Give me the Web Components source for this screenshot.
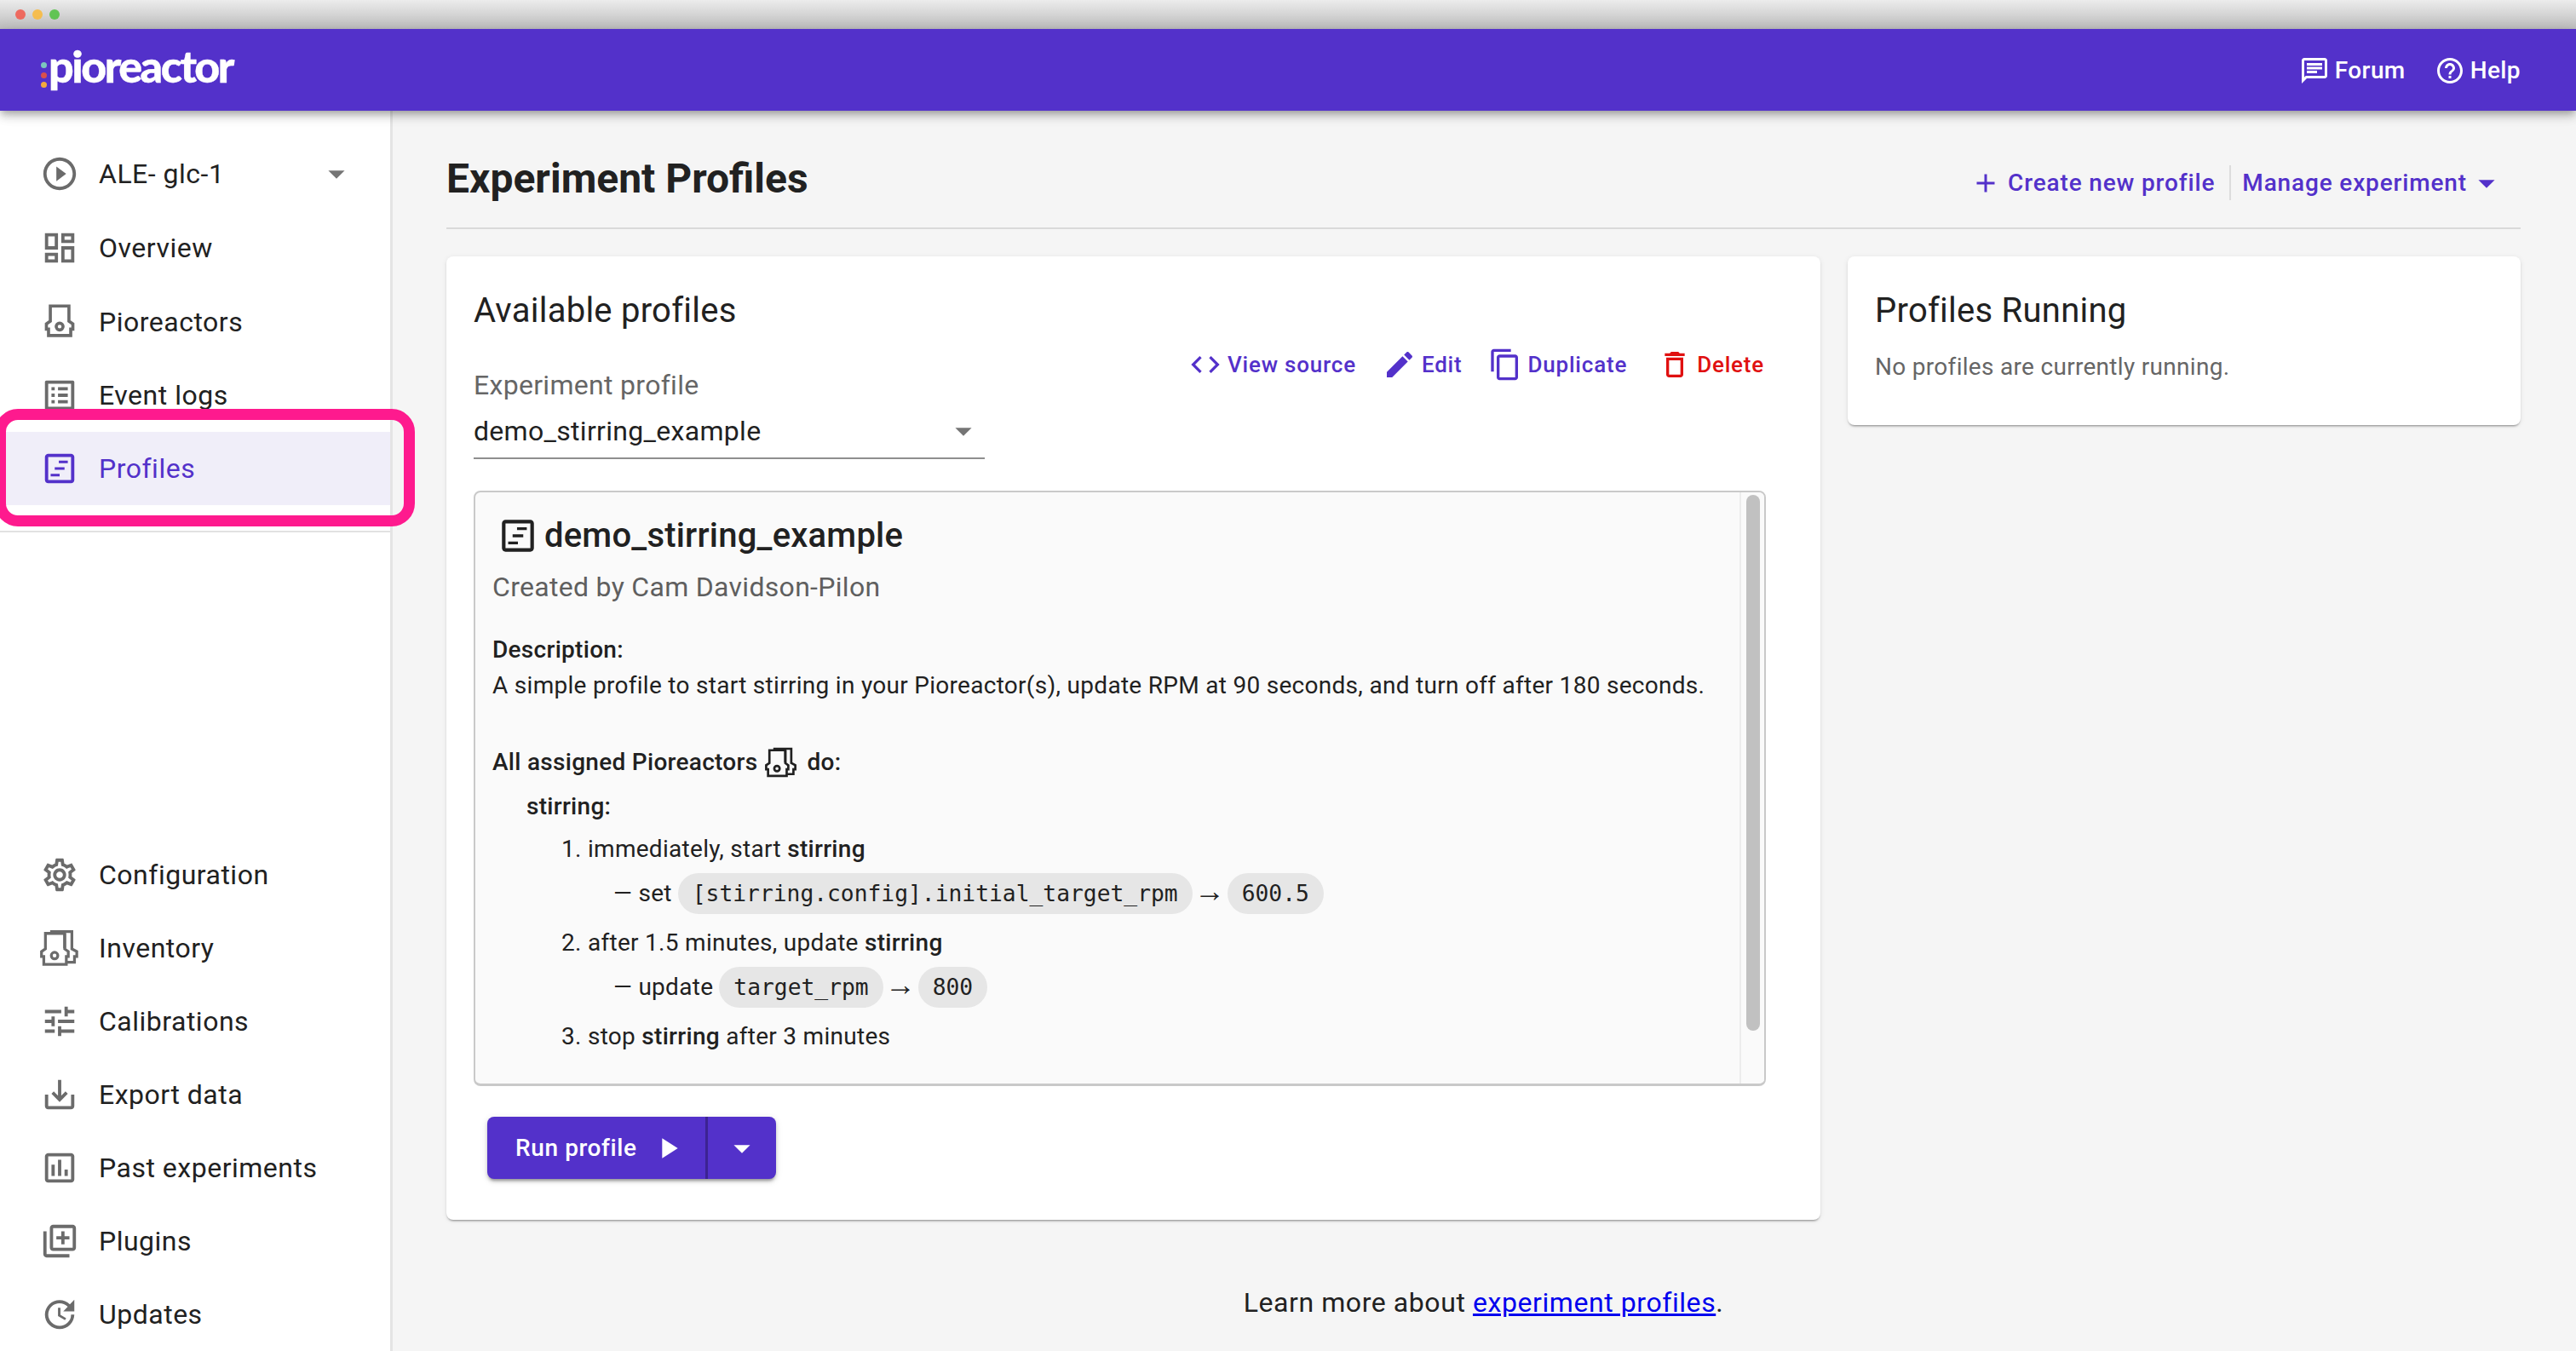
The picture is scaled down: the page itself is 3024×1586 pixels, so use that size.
<!DOCTYPE html>
<html lang="en">
<head>
<meta charset="utf-8">
<title>Pioreactor - Experiment Profiles</title>
<style>
html,body{margin:0;padding:0;background:#f5f5f5;font-family:Roboto,"Liberation Sans",sans-serif;color:#212121;}
</style>
</head>
<body>
<pio-app></pio-app>
<script>
const ICONS = {
  playCircle:'<path d="M10 16.5l6-4.5-6-4.5v9zM12 2C6.48 2 2 6.48 2 12s4.48 10 10 10 10-4.48 10-10S17.52 2 12 2zm0 18c-4.41 0-8-3.59-8-8s3.59-8 8-8 8 3.59 8 8-3.59 8-8 8z"/>',
  dashboard:'<path d="M19 5v2h-4V5h4M9 5v6H5V5h4m10 8v6h-4v-6h4M9 17v2H5v-2h4M21 3h-8v6h8V3zM11 3H3v10h8V3zm10 8h-8v10h8V11zm-10 4H3v6h8v-6z"/>',
  pioreactor:'<g fill="none" stroke="currentColor" stroke-width="1.9"><path d="M6.3 11.5V2.2h11.4v9.3l2.4 1.7v3.2h-1.3v3.9H5.2v-3.9H3.9v-3.2z"/><circle cx="12" cy="14.8" r="2.1"/></g>',
  inventory:'<g fill="none" stroke="currentColor" stroke-width="1.7"><path d="M3.3 12.5V3h11.8v9.5l2.2 1.6v3h-1.2v4.9H2.3v-4.9H.9v-3z"/><path d="M6.2 1.9h13.3v10.6l3 1.6v3h-1.4v3.6h-4.6"/><path d="M15.1 3v9"/><circle cx="8.9" cy="16.6" r="2"/></g>',
  listAlt:'<path d="M11 7h6v2h-6zm0 4h6v2h-6zm0 4h6v2h-6zM7 7h2v2H7zm0 4h2v2H7zm0 4h2v2H7zM20.1 3H3.9c-.5 0-.9.4-.9.9v16.2c0 .4.4.9.9.9h16.2c.4 0 .9-.5.9-.9V3.9c0-.5-.5-.9-.9-.9zM19 19H5V5h14v14z"/>',
  timeline:'<path d="M19 3H5c-1.1 0-2 .9-2 2v14c0 1.1.9 2 2 2h14c1.1 0 2-.9 2-2V5c0-1.1-.9-2-2-2zm0 16H5V5h14v14z"/><path d="M11.5 7.2H17v1.6h-5.5zM9 11.2h6v1.6H9zM6.5 15.2H12v1.6H6.5z"/>',
  settings:'<path d="M19.43 12.98c.04-.32.07-.64.07-.98 0-.34-.03-.66-.07-.98l2.11-1.65c.19-.15.24-.42.12-.64l-2-3.46c-.09-.16-.26-.25-.44-.25-.06 0-.12.01-.17.03l-2.49 1c-.52-.4-1.08-.73-1.69-.98l-.38-2.65C14.46 2.18 14.25 2 14 2h-4c-.25 0-.46.18-.49.42l-.38 2.65c-.61.25-1.17.59-1.69.98l-2.49-1c-.06-.02-.12-.03-.18-.03-.17 0-.34.09-.43.25l-2 3.46c-.13.22-.07.49.12.64l2.11 1.65c-.04.32-.07.65-.07.98 0 .33.03.66.07.98l-2.11 1.65c-.19.15-.24.42-.12.64l2 3.46c.09.16.26.25.44.25.06 0 .12-.01.17-.03l2.49-1c.52.4 1.08.73 1.69.98l.38 2.65c.03.24.24.42.49.42h4c.25 0 .46-.18.49-.42l.38-2.65c.61-.25 1.17-.59 1.69-.98l2.49 1c.06.02.12.03.18.03.17 0 .34-.09.43-.25l2-3.46c.12-.22.07-.49-.12-.64l-2.11-1.65zm-1.98-1.71c.04.31.05.52.05.73 0 .21-.02.43-.05.73l-.14 1.13.89.7 1.08.84-.7 1.21-1.27-.51-1.04-.42-.9.68c-.43.32-.84.56-1.25.73l-1.06.43-.16 1.13-.2 1.35h-1.4l-.19-1.35-.16-1.13-1.06-.43c-.43-.18-.83-.41-1.23-.71l-.91-.7-1.06.43-1.27.51-.7-1.21 1.08-.84.89-.7-.14-1.13c-.03-.31-.05-.54-.05-.74s.02-.43.05-.73l.14-1.13-.89-.7-1.08-.84.7-1.21 1.27.51 1.04.42.9-.68c.43-.32.84-.56 1.25-.73l1.06-.43.16-1.13.2-1.35h1.39l.19 1.35.16 1.13 1.06.43c.43.18.83.41 1.23.71l.91.7 1.06-.43 1.27-.51.7 1.21-1.07.85-.89.7.14 1.13zM12 8c-2.21 0-4 1.79-4 4s1.79 4 4 4 4-1.79 4-4-1.79-4-4-4zm0 6c-1.1 0-2-.9-2-2s.9-2 2-2 2 .9 2 2-.9 2-2 2z"/>',
  tune:'<path d="M3 17v2h6v-2H3zM3 5v2h10V5H3zm10 16v-2h8v-2h-8v-2h-2v6h2zM7 9v2H3v2h4v2h2V9H7zm14 4v-2H11v2h10zm-6-4h2V7h4V5h-4V3h-2v6z"/>',
  saveAlt:'<path d="M19 12v7H5v-7H3v7c0 1.1.9 2 2 2h14c1.1 0 2-.9 2-2v-7h-2zm-6 .67l2.59-2.58L17 11.5l-5 5-5-5 1.41-1.41L11 12.67V3h2z"/>',
  poll:'<path d="M19 3H5c-1.1 0-2 .9-2 2v14c0 1.1.9 2 2 2h14c1.1 0 2-.9 2-2V5c0-1.1-.9-2-2-2zm0 16H5V5h14v14zM7 10h2v7H7zm4-3h2v10h-2zm4 6h2v4h-2z"/>',
  libraryAdd:'<path d="M4 6H2v14c0 1.1.9 2 2 2h14v-2H4V6zm16-4H8c-1.1 0-2 .9-2 2v12c0 1.1.9 2 2 2h12c1.1 0 2-.9 2-2V4c0-1.1-.9-2-2-2zm0 14H8V4h12v12zm-7-2h2v-3h3V9h-3V6h-2v3h-3v2h3z"/>',
  update:'<path d="M21 10.12h-6.78l2.74-2.82c-2.73-2.7-7.15-2.8-9.88-.1-2.73 2.71-2.73 7.08 0 9.79s7.15 2.71 9.88 0C18.32 15.65 19 14.08 19 12.1h2c0 1.98-.88 4.55-2.64 6.29-3.51 3.48-9.21 3.48-12.72 0-3.5-3.47-3.53-9.11-.02-12.58s9.14-3.47 12.65 0L21 3v7.12zM12.5 8v4.25l3.5 2.08-.72 1.21L11 13V8h1.5z"/>',
  caret:'<path d="M7 10l5 5 5-5z"/>',
  code:'<path d="M9.4 16.6L4.8 12l4.6-4.6L8 6l-6 6 6 6 1.4-1.4zm5.2 0l4.6-4.6-4.6-4.6L16 6l6 6-6 6-1.4-1.4z"/>',
  edit:'<path d="M3 17.25V21h3.75L17.81 9.94l-3.75-3.75L3 17.25zM20.71 7.04c.39-.39.39-1.02 0-1.41l-2.34-2.34c-.39-.39-1.02-.39-1.41 0l-1.83 1.83 3.75 3.75 1.83-1.83z"/>',
  copy:'<path d="M16 1H4c-1.1 0-2 .9-2 2v14h2V3h12V1zm3 4H8c-1.1 0-2 .9-2 2v14c0 1.1.9 2 2 2h11c1.1 0 2-.9 2-2V7c0-1.1-.9-2-2-2zm0 16H8V7h11v14z"/>',
  trash:'<path d="M6 19c0 1.1.9 2 2 2h8c1.1 0 2-.9 2-2V7H6v12zM8 9h8v10H8V9zm7.5-5l-1-1h-5l-1 1H5v2h14V4z"/>',
  add:'<path d="M19 13h-6v6h-2v-6H5v-2h6V5h2v6h6v2z"/>',
  play:'<path d="M8 5v14l11-7z"/>',
  forum:'<path d="M20 2H4c-1.1 0-1.99.9-1.99 2L2 22l4-4h14c1.1 0 2-.9 2-2V4c0-1.1-.9-2-2-2zm0 14H5.17L4 17.17V4h16v12zM6 12h8v2H6zm0-3h12v2H6zm0-3h12v2H6z"/>',
  help:'<path d="M11 18h2v-2h-2v2zm1-16C6.48 2 2 6.48 2 12s4.48 10 10 10 10-4.48 10-10S17.52 2 12 2zm0 18c-4.41 0-8-3.59-8-8s3.59-8 8-8 8 3.59 8 8-3.59 8-8 8zm0-14c-2.21 0-4 1.79-4 4h2c0-1.1.9-2 2-2s2 .9 2 2c0 2-3 1.75-3 5h2c0-2.25 3-2.5 3-5 0-2.21-1.79-4-4-4z"/>'
};

class Base extends HTMLElement {
  constructor(){ super(); this.attachShadow({mode:'open'}); }
  connectedCallback(){ if(!this._r){ this._r=true; this.shadowRoot.innerHTML=this.render(); } }
}
const define=(n,c)=>customElements.define(n,c);

define('ui-icon', class extends Base {
  render(){
    const s=this.getAttribute('size')||46;
    return `<style>:host{display:inline-flex;flex:none;width:${s}px;height:${s}px;}svg{width:100%;height:100%;fill:currentColor;display:block;overflow:visible}</style>
    <svg viewBox="0 0 24 24" aria-hidden="true">${ICONS[this.getAttribute('name')]||''}</svg>`;
  }
});

define('mac-titlebar', class extends Base {
  render(){ return `<style>
    :host{display:flex;align-items:center;gap:8px;height:34px;box-sizing:border-box;padding:0 0 0 18px;background:linear-gradient(#ececec,#bdbdbd);}
    i{width:12px;height:12px;border-radius:50%;display:block}
  </style><i style="background:#ee6a5f"></i><i style="background:#f5bd4f"></i><i style="background:#61c454"></i>`; }
});

define('pio-logo', class extends Base {
  render(){ return `<style>
    :host{display:flex;align-items:center;gap:2px;margin-top:-6px}
    .dots{display:flex;flex-direction:column;gap:4.5px;margin-top:18px}
    .dots i{display:block;width:7px;height:7px;border-radius:50%}
    span{font:900 52px/60px Lato,"Open Sans",sans-serif;color:#fff;letter-spacing:-2.5px;display:block;margin-top:-5px;-webkit-text-stroke:.4px #fff}
  </style><div class="dots"><i style="background:#7cc7bd"></i><i style="background:#d8504d"></i><i style="background:#f3a93c"></i></div><span>pioreactor</span>`; }
});

define('head-link', class extends Base {
  render(){ return `<style>
    :host{display:inline-flex;align-items:center;gap:6px;color:#fff;font:500 28px/36px Roboto,sans-serif;letter-spacing:.4px}
  </style><ui-icon name="${this.getAttribute('icon')}" size="36"></ui-icon><slot></slot>`; }
});

define('app-header', class extends Base {
  render(){ return `<style>
    :host{display:flex;align-items:center;justify-content:space-between;height:96px;box-sizing:border-box;padding:0 65px 0 48px;background:#5331ca;
      box-shadow:0 4px 8px -2px rgba(0,0,0,.25),0 8px 10px rgba(0,0,0,.12),0 2px 18px rgba(0,0,0,.1);position:relative;z-index:2}
    .right{display:flex;gap:34px;align-items:center;margin-top:1px}
  </style><pio-logo></pio-logo><div class="right"><head-link icon="forum">Forum</head-link><head-link icon="help">Help</head-link></div>`; }
});

define('nav-item', class extends Base {
  render(){
    const sel=this.hasAttribute('selected');
    const caret=this.hasAttribute('caret');
    return `<style>
    :host{display:flex;align-items:center;height:86.3px;box-sizing:border-box;padding:0 40px 0 47px;gap:23px;
      font:400 32px/44px Roboto,sans-serif;letter-spacing:.5px;color:${sel?'#5331ca':'#212121'};background:${sel?'#f0eef9':'transparent'}}
    ui-icon{color:${sel?'#5331ca':'#6b6b6b'}}
    span{flex:1}
  </style><ui-icon name="${this.getAttribute('icon')}"></ui-icon><span><slot></slot></span>${caret?'<ui-icon name="caret" style="color:#757575"></ui-icon>':''}`;
  }
});

define('side-nav', class extends Base {
  render(){ return `<style>
    :host{display:flex;flex-direction:column;box-sizing:border-box;width:461px;background:#fff;border-right:3px solid #e4e4e4;position:relative;z-index:1;height:100%}
    .top{padding:32px 0 30px;border-bottom:2px solid #e2e2e2}
    .bottom{margin-top:auto}
    .bottom nav-item{height:86px}
    .first{margin-top:-1px;margin-bottom:1px}
    .mark{position:absolute;left:-6px;top:350px;width:493px;height:138px;box-sizing:border-box;border:13px solid #fe1a8e;border-radius:27px;pointer-events:none}
  </style>
  <div class="top">
    <nav-item class="first" icon="playCircle" caret>ALE- glc-1</nav-item>
    <nav-item icon="dashboard">Overview</nav-item>
    <nav-item icon="pioreactor">Pioreactors</nav-item>
    <nav-item icon="listAlt">Event logs</nav-item>
    <nav-item icon="timeline" selected>Profiles</nav-item>
  </div>
  <div class="bottom">
    <nav-item icon="settings">Configuration</nav-item>
    <nav-item icon="inventory">Inventory</nav-item>
    <nav-item icon="tune">Calibrations</nav-item>
    <nav-item icon="saveAlt">Export data</nav-item>
    <nav-item icon="poll">Past experiments</nav-item>
    <nav-item icon="libraryAdd">Plugins</nav-item>
    <nav-item icon="update">Updates</nav-item>
  </div>
  <div class="mark"></div>`; }
});

define('text-btn', class extends Base {
  render(){
    const color=this.getAttribute('color')||'#5331ca';
    const s=this.getAttribute('size')||40;
    const ic=this.getAttribute('icon');
    return `<style>
    :host{display:inline-flex;align-items:center;gap:6px;color:${color};font:500 26px/40px Roboto,sans-serif;letter-spacing:.8px;height:40px}
  </style>${ic?`<ui-icon name="${ic}" size="${s}"></ui-icon>`:''}<slot></slot>`;
  }
});

define('page-head', class extends Base {
  render(){ return `<style>
    :host{display:flex;justify-content:space-between;align-items:flex-start;padding:50px 0 27px;border-bottom:2px solid #d9d9d9}
    h1{margin:0;font:700 48px/60px Roboto,sans-serif;color:#212121;letter-spacing:0}
    .acts{display:flex;align-items:center;margin-top:14px;height:41px;font:500 28px/41px Roboto,sans-serif;color:#5331ca;letter-spacing:.85px;padding-right:31px}
    .a{display:flex;align-items:center;gap:8px}
    .sep{width:2px;height:41px;background:#dcdcdc;margin:0 13px 0 17px}
  </style><h1>Experiment Profiles</h1>
  <div class="acts"><span class="a"><ui-icon name="add" size="36"></ui-icon>Create new profile</span><span class="sep"></span><span class="a">Manage experiment<ui-icon name="caret" size="46" style="margin:0 -14px 0 -8px"></ui-icon></span></div>`; }
});

define('pio-card', class extends Base {
  render(){ return `<style>
    :host{display:block;background:#fff;border-radius:8px;padding:42px 33px 48px 32px;box-sizing:border-box;
      box-shadow:0 3px 2px -2px rgba(0,0,0,.25),0 2px 2px rgba(0,0,0,.12),0 1px 6px rgba(0,0,0,.08)}
    h2{margin:0;font:400 40px/44px Roboto,sans-serif;letter-spacing:.25px;color:#212121}
  </style><h2>${this.getAttribute('heading')}</h2><slot></slot>`; }
});

define('mui-select', class extends Base {
  render(){ return `<style>
    :host{display:block;width:600px;box-sizing:border-box;padding:27px 0 0;font-family:Roboto,sans-serif}
    label{display:block;font:400 32px/36px Roboto,sans-serif;color:#666;letter-spacing:.3px}
    .v{display:flex;align-items:center;justify-content:space-between;height:42px;margin-top:15px;padding:0 1px 10px 0;border-bottom:2px solid #8f8f8f;font:400 32px/42px Roboto,sans-serif;color:#212121;letter-spacing:.3px;box-sizing:content-box}
    ui-icon{color:#757575;margin-right:1px}
  </style><label>${this.getAttribute('label')}</label><div class="v"><span><slot></slot></span><ui-icon name="caret" size="46"></ui-icon></div>`; }
});

define('code-pill', class extends Base {
  render(){ return `<style>
    :host{display:inline-flex;align-items:center;height:48px;padding:0 17px;border-radius:24px;background:#e6e6e6;color:#212121;font:400 26.3px/48px "DejaVu Sans Mono","Liberation Mono",monospace;letter-spacing:0;white-space:pre;}
  </style><slot></slot>`; }
});

define('pio-row', class extends Base {
  render(){ return `<style>
    :host{display:flex;align-items:center;height:48px;margin:7px 0 13px 142px;gap:7px;white-space:nowrap}
  </style><slot></slot>`; }
});

define('profile-preview', class extends Base {
  render(){ return `<style>
    :host{display:flex;width:1517px;height:699px;box-sizing:border-box;margin-top:37px;border:3px solid #c9c9c9;border-width:2px 2px 3px 2px;border-radius:8px;background:#fafafa;overflow:hidden;
      font:400 28px/42px Roboto,sans-serif;color:#212121;letter-spacing:.29px}
    .content{flex:1;min-width:0;padding:26px 0 0 20px;white-space:nowrap}
    .title{display:flex;align-items:center;height:50px;gap:6px;margin-left:5px;font:500 40px/50px Roboto,sans-serif;letter-spacing:.2px;color:#212121}
    .by{margin-top:17px;font:400 32px/36px Roboto,sans-serif;color:#5f5f5f;letter-spacing:.3px}
    .desc{margin-top:35px}
    b{font-weight:500}
    .all{margin-top:47.5px;display:flex;align-items:center;height:42px;gap:9px}
    .l1{margin:10px 0 0 40px;height:42px}
    .l2{margin:8px 0 0 81px;height:42px}
    .l2.n{margin-top:0}
    .scroll{flex:none;width:29px;border-left:2px solid #ececec;padding:3px 4px 0 6px;box-sizing:border-box;background:#fafafa}
    .thumb{width:16px;height:629px;background:#c1c1c1;border-radius:8px}
    .arrow{font:400 36px/48px "Liberation Sans",sans-serif;width:27px;display:flex;justify-content:center;letter-spacing:0;margin-top:-5px}
  </style>
  <div class="content">
    <div class="title"><ui-icon name="timeline" size="50"></ui-icon>demo_stirring_example</div>
    <div class="by">Created by Cam Davidson-Pilon</div>
    <div class="desc"><b>Description:</b><br>A simple profile to start stirring in your Pioreactor(s), update RPM at 90 seconds, and turn off after 180 seconds.</div>
    <div class="all"><b>All assigned Pioreactors</b><ui-icon name="inventory" size="38"></ui-icon><b style="margin-left:2px">do:</b></div>
    <div class="l1"><b>stirring:</b></div>
    <div class="l2">1. immediately, start <b>stirring</b></div>
    <pio-row><span>— set</span><code-pill>[stirring.config].initial_target_rpm</code-pill><span class="arrow">→</span><code-pill>600.5</code-pill></pio-row>
    <div class="l2 n">2. after 1.5 minutes, update <b>stirring</b></div>
    <pio-row><span>— update</span><code-pill>target_rpm</code-pill><span class="arrow">→</span><code-pill>800</code-pill></pio-row>
    <div class="l2 n">3. stop <b>stirring</b> after 3 minutes</div>
  </div>
  <div class="scroll"><div class="thumb"></div></div>`; }
});

define('split-button', class extends Base {
  render(){ return `<style>
    :host{display:inline-flex;height:73px;margin:36px 0 0 16px;border-radius:8px;background:#5331ca;color:#fff;vertical-align:top;
      box-shadow:0 4px 3px -2px rgba(0,0,0,.25),0 3px 4px rgba(0,0,0,.14),0 2px 8px rgba(0,0,0,.12);font:500 28px/73px Roboto,sans-serif;letter-spacing:.6px}
    .m{display:flex;align-items:center;width:259px;box-sizing:border-box;padding-left:33px;gap:16px;border-right:3px solid #3c2392}
    .c{display:flex;align-items:center;justify-content:center;width:80px}
  </style><div class="m"><slot></slot><ui-icon name="play" size="40"></ui-icon></div><div class="c"><ui-icon name="caret" size="46"></ui-icon></div>`; }
});

define('profiles-page', class extends Base {
  render(){ return `<style>
    :host{display:block;padding:0 65px 0 63px;box-sizing:border-box;flex:1;min-width:0}
    .grid{display:grid;grid-template-columns:1613px 790px;gap:32px;margin-top:32px;align-items:start}
    .row{display:flex;justify-content:space-between;align-items:flex-start;margin-top:20px}
    .acts{display:flex;align-items:center;gap:31px;padding-right:33px;margin-top:1px}
    p{margin:26px 0 0;font:400 28px/36px Roboto,sans-serif;color:#666;letter-spacing:.3px;padding-bottom:0}
    .foot{margin-top:74px;text-align:center;font:400 32px/46px Roboto,sans-serif;letter-spacing:.57px;color:#212121}
    a{color:#0000ee;text-decoration:underline}
    .right{padding-bottom:50px}
  </style>
  <page-head></page-head>
  <div class="grid">
    <pio-card heading="Available profiles">
      <div class="row">
        <mui-select label="Experiment profile">demo_stirring_example</mui-select>
        <div class="acts">
          <text-btn icon="code">View source</text-btn>
          <text-btn icon="edit">Edit</text-btn>
          <text-btn icon="copy">Duplicate</text-btn>
          <text-btn icon="trash" color="#e01010" style="margin-left:5px">Delete</text-btn>
        </div>
      </div>
      <profile-preview></profile-preview>
      <split-button>Run profile</split-button>
    </pio-card>
    <pio-card heading="Profiles Running" class="right">
      <p>No profiles are currently running.</p>
    </pio-card>
  </div>
  <div class="foot">Learn more about <a href="#">experiment profiles</a>.</div>`; }
});

define('pio-app', class extends Base {
  render(){ return `<style>
    :host{display:grid;grid-template-rows:34px 96px 1456px;width:3024px;height:1586px;overflow:hidden;background:#f5f5f5;font-family:Roboto,sans-serif}
    .body{display:flex;min-height:0}
  </style><mac-titlebar></mac-titlebar><app-header></app-header><div class="body"><side-nav></side-nav><profiles-page></profiles-page></div>`; }
});
</script>
</body>
</html>
